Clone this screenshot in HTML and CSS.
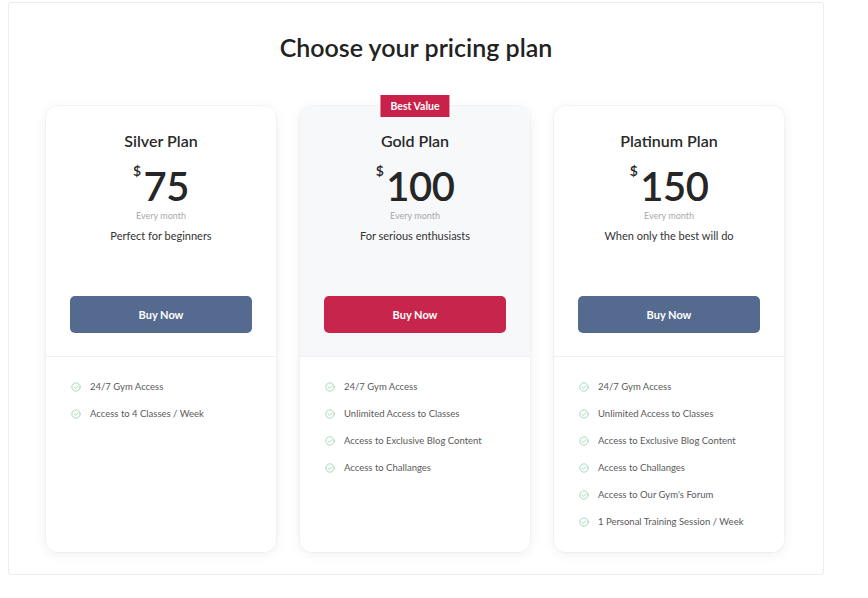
FILE: index.html
```html
<!DOCTYPE html>
<html lang="en">
<head>
    <meta charset="UTF-8">
    <meta name="viewport" content="width=device-width, initial-scale=1.0">
    <title>Pricing Plans</title>
    <link rel="stylesheet" href="styles.css">
</head>
<body>

<div class="frame">
    <h1 class="title">Choose your pricing plan</h1>

    <div class="plans">
        <div class="plan">
            <div class="plan-head">
                <h2>Silver Plan</h2>
                <div class="price"><span class="cur">$</span>75</div>
                <div class="period">Every month</div>
                <p class="desc">Perfect for beginners</p>
                <button class="buy">Buy Now</button>
            </div>
            <ul class="features">
                <li><svg viewBox="0 0 12 12"><circle cx="6" cy="6" r="5"/><path d="M3.7 6.1l1.6 1.6 3-3.1"/></svg>24/7 Gym Access</li>
                <li><svg viewBox="0 0 12 12"><circle cx="6" cy="6" r="5"/><path d="M3.7 6.1l1.6 1.6 3-3.1"/></svg>Access to 4 Classes / Week</li>
            </ul>
        </div>

        <div class="plan featured">
            <span class="badge">Best Value</span>
            <div class="plan-head">
                <h2>Gold Plan</h2>
                <div class="price"><span class="cur">$</span>100</div>
                <div class="period">Every month</div>
                <p class="desc">For serious enthusiasts</p>
                <button class="buy">Buy Now</button>
            </div>
            <ul class="features">
                <li><svg viewBox="0 0 12 12"><circle cx="6" cy="6" r="5"/><path d="M3.7 6.1l1.6 1.6 3-3.1"/></svg>24/7 Gym Access</li>
                <li><svg viewBox="0 0 12 12"><circle cx="6" cy="6" r="5"/><path d="M3.7 6.1l1.6 1.6 3-3.1"/></svg>Unlimited Access to Classes</li>
                <li><svg viewBox="0 0 12 12"><circle cx="6" cy="6" r="5"/><path d="M3.7 6.1l1.6 1.6 3-3.1"/></svg>Access to Exclusive Blog Content</li>
                <li><svg viewBox="0 0 12 12"><circle cx="6" cy="6" r="5"/><path d="M3.7 6.1l1.6 1.6 3-3.1"/></svg>Access to Challanges</li>
            </ul>
        </div>

        <div class="plan">
            <div class="plan-head">
                <h2>Platinum Plan</h2>
                <div class="price"><span class="cur">$</span>150</div>
                <div class="period">Every month</div>
                <p class="desc">When only the best will do</p>
                <button class="buy">Buy Now</button>
            </div>
            <ul class="features">
                <li><svg viewBox="0 0 12 12"><circle cx="6" cy="6" r="5"/><path d="M3.7 6.1l1.6 1.6 3-3.1"/></svg>24/7 Gym Access</li>
                <li><svg viewBox="0 0 12 12"><circle cx="6" cy="6" r="5"/><path d="M3.7 6.1l1.6 1.6 3-3.1"/></svg>Unlimited Access to Classes</li>
                <li><svg viewBox="0 0 12 12"><circle cx="6" cy="6" r="5"/><path d="M3.7 6.1l1.6 1.6 3-3.1"/></svg>Access to Exclusive Blog Content</li>
                <li><svg viewBox="0 0 12 12"><circle cx="6" cy="6" r="5"/><path d="M3.7 6.1l1.6 1.6 3-3.1"/></svg>Access to Challanges</li>
                <li><svg viewBox="0 0 12 12"><circle cx="6" cy="6" r="5"/><path d="M3.7 6.1l1.6 1.6 3-3.1"/></svg>Access to Our Gym's Forum</li>
                <li><svg viewBox="0 0 12 12"><circle cx="6" cy="6" r="5"/><path d="M3.7 6.1l1.6 1.6 3-3.1"/></svg>1 Personal Training Session / Week</li>
            </ul>
        </div>
    </div>
</div>

</body>
</html>
```

FILE: styles.css
```css
body {
    margin: 0;
    background: #fff;
    font-family: Lato, "Open Sans", sans-serif;
    color: #2a2a2a;
}
.frame {
    box-sizing: border-box;
    width: 816px;
    height: 573px;
    margin: 2px 0 0 8px;
    padding: 29px 0 0;
    border: 1px solid #ececec;
    border-radius: 3px;
}
.title {
    margin: 0;
    font-size: 25px;
    line-height: 30px;
    font-weight: 600;
    text-align: center;
    color: #222;
}
.plans {
    display: flex;
    justify-content: center;
    gap: 24px;
    margin-top: 44px;
    padding-right: 2px;
}
.plan {
    position: relative;
    width: 230px;
    height: 446px;
    background: #fff;
    border-radius: 12px;
    box-shadow: 0 2px 12px rgba(0, 0, 0, 0.07), 0 0 0 1px rgba(0, 0, 0, 0.025);
    display: flex;
    flex-direction: column;
}
.plan-head {
    padding: 25px 24px 23px;
    text-align: center;
    border-bottom: 1px solid #f0f0f2;
    border-radius: 12px 12px 0 0;
}
.featured .plan-head {
    background: #f7f8fa;
}
.plan-head h2 {
    margin: 0;
    font-size: 16px;
    line-height: 20px;
    font-weight: 600;
    color: #2a2a2a;
}
.price {
    margin-top: 15px;
    font-size: 40px;
    line-height: 40px;
    font-weight: 600;
    color: #262626;
    letter-spacing: -0.5px;
}
.price .cur {
    font-size: 14px;
    vertical-align: top;
    line-height: 14px;
    margin-right: 3px;
    position: relative;
    top: -2px;
}
.period {
    margin-top: 4px;
    font-size: 9px;
    line-height: 11px;
    color: #a9a9a9;
}
.desc {
    margin: 8px 0 0;
    font-size: 11px;
    line-height: 14px;
    color: #333;
}
.buy {
    display: block;
    width: 100%;
    height: 37px;
    margin-top: 53px;
    border: none;
    border-radius: 5px;
    background: #546a8e;
    color: #fff;
    font-family: inherit;
    font-size: 11px;
    font-weight: 700;
    cursor: pointer;
}
.featured .buy {
    background: #c7254b;
}
.badge {
    position: absolute;
    top: -11px;
    left: 50%;
    transform: translateX(-50%);
    padding: 0 10px;
    height: 22px;
    line-height: 22px;
    background: #c8214a;
    color: #fff;
    font-size: 10.5px;
    font-weight: 700;
    white-space: nowrap;
}
.features {
    list-style: none;
    margin: 0;
    padding: 16px 24px 0 25px;
}
.features li {
    display: flex;
    align-items: center;
    gap: 9px;
    height: 27px;
    font-size: 9.5px;
    color: #5a5a5a;
}
.features svg {
    width: 10px;
    height: 10px;
    fill: none;
    stroke: #93d5aa;
    stroke-width: 1;
    stroke-linecap: round;
    stroke-linejoin: round;
    flex-shrink: 0;
}
```
